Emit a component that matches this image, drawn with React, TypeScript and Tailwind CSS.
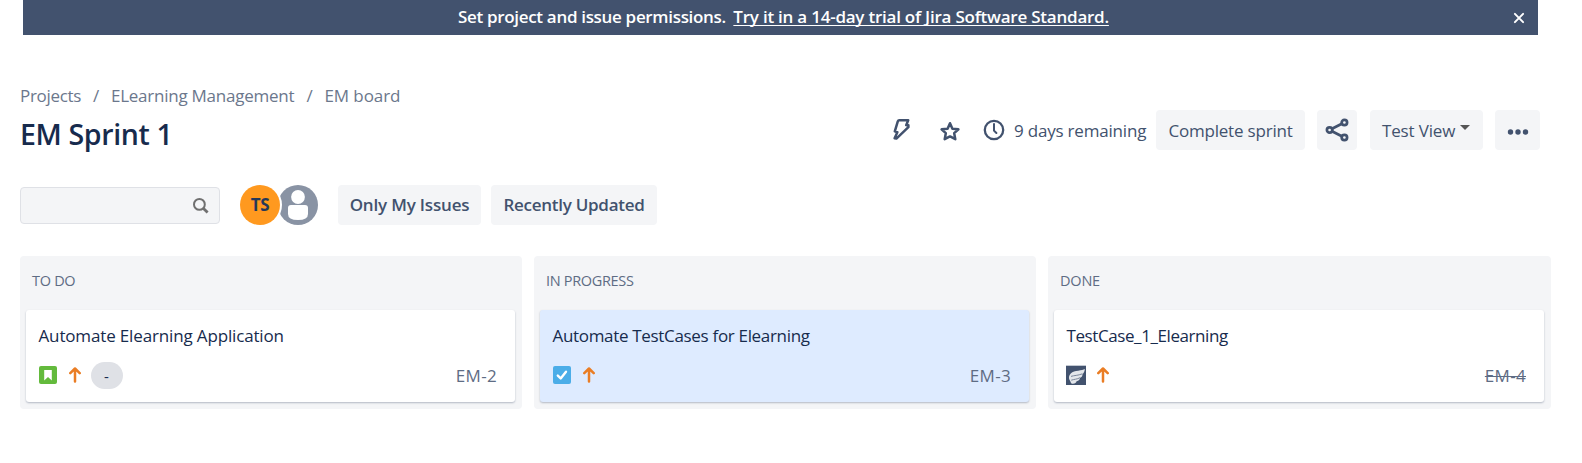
import React, { ReactNode } from 'react';

function BoltIcon() {
  return (
    <svg width="20" height="24" viewBox="0 0 20 24" className="shrink-0" fill="none" stroke="#42526e" strokeWidth="2.5" strokeLinejoin="round">
      <path d="M8.2 2.2H17.2L15.2 7.2H17.4V9.2L5.4 20.6L3.6 20.2L6.4 14.2L3.8 13.4L6.8 3.4Q7.2 2.2 8.2 2.2Z" />
    </svg>
  );
}

function StarIcon() {
  return (
    <svg width="22" height="22" viewBox="0 0 22 22" className="shrink-0" fill="none" stroke="#42526e" strokeWidth="2.5" strokeLinejoin="round">
      <path d="M11 3.2L13.4 8.8L19.4 9.3L15.2 13.2L16.3 19.2L11 16.4L5.7 19.2L6.8 13.2L2.6 9.3L8.6 8.8Z" />
    </svg>
  );
}

function ClockIcon() {
  return (
    <svg width="22" height="22" viewBox="0 0 22 22" className="shrink-0" fill="none" stroke="#42526e" strokeWidth="2.3" strokeLinecap="round">
      <circle cx="11" cy="11" r="9.2" />
      <path d="M11 5V11.6L13.4 14" strokeWidth="2" />
    </svg>
  );
}

function ShareIcon() {
  return (
    <svg width="24" height="24" viewBox="0 0 24 24" fill="none" stroke="#42526e" strokeWidth="2.7">
      <circle cx="4.6" cy="12" r="2.7" />
      <circle cx="19.4" cy="4.5" r="2.7" />
      <circle cx="19.4" cy="19.5" r="2.7" />
      <path d="M7 10.7L16.8 5.8M7 13.3L16.8 18.2" />
    </svg>
  );
}

function SearchIcon() {
  return (
    <svg width="17" height="17" viewBox="0 0 17 17" fill="none" stroke="#707070">
      <circle cx="7.4" cy="7.4" r="5.4" strokeWidth="2" />
      <path d="M11 11L15.6 15.6" strokeWidth="2.8" />
    </svg>
  );
}

function ArrowUpIcon() {
  return (
    <svg width="12" height="16" viewBox="0 0 12 16" className="shrink-0" fill="none" stroke="#ea7d24" strokeWidth="2.5" strokeLinecap="round" strokeLinejoin="round">
      <path d="M6 14.6V1.7M1.3 6.2L6 1.5L10.7 6.2" />
    </svg>
  );
}

function StoryIcon() {
  return (
    <svg width="18" height="18" viewBox="0 0 18 18" className="shrink-0">
      <rect width="18" height="18" rx="2" fill="#63ba3c" />
      <path d="M5.2 4H12.8V14.4L9 10.9L5.2 14.4Z" fill="#fff" />
    </svg>
  );
}

function TaskIcon() {
  return (
    <svg width="18" height="18" viewBox="0 0 18 18" className="shrink-0">
      <rect width="18" height="18" rx="2" fill="#4bade8" />
      <path d="M4.8 9.6L7.7 12.4L13 5.8" fill="none" stroke="#fff" strokeWidth="2.4" strokeLinecap="round" strokeLinejoin="round" />
    </svg>
  );
}

function TestIcon() {
  return (
    <svg width="20" height="20" viewBox="0 0 20 20" className="shrink-0">
      <rect width="20" height="20" fill="#42526e" />
      <rect width="20" height="1" fill="#c3c9d2" />
      <path d="M18.8 4C16.6 5.6 8 5.4 5 8.2C3.4 9.8 2.8 11.4 3 13.2C3.2 14.6 4 15.2 4.4 16.4C4.8 17.8 5.4 18.7 7 18.7C9 18.7 10.2 17.6 10.6 16.2C12.8 15.6 14 14.4 14 13C15.8 12 16.6 10.6 16.4 9.4C17.8 8 18.8 6 18.8 4Z" fill="#e3e6ea" />
      <path d="M5 11.4C8 10.4 12 10.6 16.4 8.8M5.2 15.2C8 14.2 11 14.4 14.2 12.6" fill="none" stroke="#7a869a" strokeWidth="1" />
    </svg>
  );
}

function Column({ title, active, last, children }: { title: ReactNode; active?: boolean; last?: boolean; children: ReactNode }) {
  return (
    <section className={`flex h-[153px] flex-col rounded-[4px] bg-[#f4f5f7] pr-[7px] pl-[6px] ${last ? 'w-[503px]' : 'w-[502px]'}`}>
      <h2 className="h-[54px] pt-[14px] pl-[6px] text-[14.5px] leading-[22px] text-[#5e6c84]">{title}</h2>
      <article
        className={`flex h-[92px] flex-col rounded-[3px] pl-[12.5px] shadow-[0_1px_2px_rgba(9,30,66,0.28)] ${active ? 'bg-[#deebff]' : 'bg-white'}`}
      >
        {children}
      </article>
    </section>
  );
}

const cardTitle = 'pt-[14px] leading-[24px] text-[#172b4d]';
const cardFooter = 'mt-[14px] flex h-[27px] items-center pr-[18px]';
const issueIcon = 'mb-px flex';

export default function App() {
  return (
    <div className="h-[463px] w-[1582px] overflow-hidden bg-white font-['Open_Sans','Noto_Sans',sans-serif] text-[17px] whitespace-nowrap">
      <header className="mr-[44px] ml-[23px] flex h-[35px] items-center bg-[#42526e] pr-[13px] pl-[435px] font-semibold text-white">
        <span className="pb-[2px] leading-[33px] tracking-[-0.32px]">Set project and issue permissions.</span>
        <a className="ml-[7.5px] pb-[2px] leading-[33px] tracking-[-0.23px] underline decoration-1 underline-offset-2 [text-decoration-skip-ink:none]">Try it in a 14-day trial of Jira Software Standard.</a>
        <svg width="12" height="12" viewBox="0 0 12 12" className="ml-auto" stroke="#fff" strokeWidth="2" strokeLinecap="round">
          <path d="M1.9 1.9L10.1 10.1M10.1 1.9L1.9 10.1" />
        </svg>
      </header>

      <div className="flex h-[150px] justify-between pr-[42px] pl-[20px]">
        <div className="pt-[48px]">
          <nav className="flex leading-[26px] text-[#6b778c]">
            <span className="w-[73px] tracking-[-0.3px]">Projects</span>
            <span className="w-[18px]">/</span>
            <span className="w-[195.5px] tracking-[-0.25px]">ELearning Management</span>
            <span className="w-[18px]">/</span>
            <span className="tracking-[-0.1px]">EM board</span>
          </nav>
          <h1 className="mt-[5px] text-[28.5px] leading-[40px] font-semibold tracking-[-0.35px] text-[#172b4d]">EM Sprint 1</h1>
        </div>
        <div className="mt-[75px] flex h-[40px] items-center text-[#42526e]">
          <BoltIcon />
          <span className="mt-px ml-[28px] flex"><StarIcon /></span>
          <span className="ml-[22px] flex"><ClockIcon /></span>
          <span className="ml-[8px] w-[143px] pt-[2px] pl-px tracking-[-0.2px]">9 days remaining</span>
          <button className="h-[40px] w-[149px] rounded-[4px] bg-[#f4f5f7] pt-[2px] tracking-[-0.2px]">Complete sprint</button>
          <button className="ml-[12px] flex h-[40px] w-[40px] items-center justify-center rounded-[4px] bg-[#f4f5f7]"><ShareIcon /></button>
          <button className="ml-[13px] flex h-[40px] w-[113px] items-center rounded-[4px] bg-[#f4f5f7] pt-[2px] pl-[12px] tracking-[-0.15px]">
            Test View
            <svg width="10" height="5" viewBox="0 0 10 5" className="mb-[8px] ml-[5px]"><path d="M0 0H10L5 5Z" fill="#555" /></svg>
          </button>
          <button className="ml-[12px] flex h-[40px] w-[45px] items-center justify-center rounded-[4px] bg-[#f4f5f7]">
            <svg width="22" height="6" viewBox="0 0 22 6" className="mt-[3px]" fill="#42526e">
              <circle cx="3.5" cy="3" r="2.7" /><circle cx="11" cy="3" r="2.7" /><circle cx="18.5" cy="3" r="2.7" />
            </svg>
          </button>
        </div>
      </div>

      <div className="flex h-[40px] items-center pl-[20px]">
        <div className="flex h-[37px] w-[200px] items-center justify-end rounded-[4px] border border-[#dfe1e6] bg-[#f4f5f7] pr-[10px]"><SearchIcon /></div>
        <div className="relative z-10 ml-[20px] flex h-[40px] w-[40px] items-center justify-center rounded-full bg-[#ff991f] text-[17px] font-bold tracking-[-0.4px] text-[#253858] shadow-[0_0_0_2px_#fff]">TS</div>
        <svg width="40" height="40" viewBox="0 0 40 40" className="-ml-[2px]">
          <circle cx="20" cy="20" r="20" fill="#8993a4" />
          <circle cx="20" cy="12" r="6.9" fill="#fff" />
          <path d="M10 23Q10 20 13 20H27Q30 20 30 23V29Q30 35 20 35Q10 35 10 29Z" fill="#fff" />
        </svg>
        <button className="ml-[20px] h-[40px] w-[143px] rounded-[4px] bg-[#f4f5f7] font-semibold tracking-[-0.18px] text-[#42526e]">Only My Issues</button>
        <button className="ml-[10px] h-[40px] w-[166px] rounded-[4px] bg-[#f4f5f7] font-semibold tracking-[-0.27px] text-[#42526e]">Recently Updated</button>
      </div>

      <main className="mt-[31px] flex gap-[12px] pl-[20px]">
        <Column title={<span className="tracking-[-0.3px]">TO DO</span>}>
          <h3 className={cardTitle}><span className="tracking-[-0.15px]">Automate Elearning Application</span></h3>
          <div className={cardFooter}>
            <span className={issueIcon}><StoryIcon /></span>
            <span className="mr-[10px] mb-px ml-[12px] flex"><ArrowUpIcon /></span>
            <span className="flex h-[27px] w-[32px] items-center justify-center rounded-full bg-[#dfe1e6] pt-px text-[15px] text-[#172b4d]">-</span>
            <span className="ml-auto tracking-[0.3px] text-[#5e6c84]">EM-2</span>
          </div>
        </Column>
        <Column active title={<span className="tracking-[-0.32px]">IN PROGRESS</span>}>
          <h3 className={cardTitle}><span className="tracking-[-0.32px]">Automate TestCases for Elearning</span></h3>
          <div className={cardFooter}>
            <span className={issueIcon}><TaskIcon /></span>
            <span className="mb-px ml-[12px] flex"><ArrowUpIcon /></span>
            <span className="ml-auto tracking-[0.3px] text-[#5e6c84]">EM-3</span>
          </div>
        </Column>
        <Column last title={<span className="tracking-[-0.2px]">DONE</span>}>
          <h3 className={cardTitle}><span className="tracking-[-0.41px]">TestCase_1_Elearning</span></h3>
          <div className={cardFooter}>
            <span className="mb-px -ml-[0.5px] flex"><TestIcon /></span>
            <span className="mb-px ml-[10.5px] flex"><ArrowUpIcon /></span>
            <span className="ml-auto tracking-[0.3px] text-[#5e6c84] line-through decoration-1">EM-4</span>
          </div>
        </Column>
      </main>
    </div>
  );
}
